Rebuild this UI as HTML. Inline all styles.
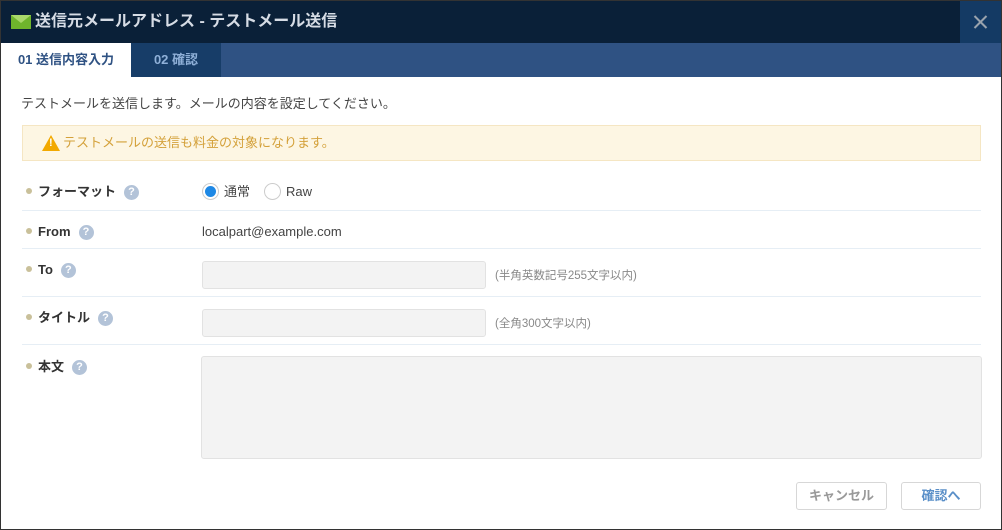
<!DOCTYPE html>
<html><head><meta charset="utf-8"><style>
*{box-sizing:border-box;margin:0;padding:0}
body{width:1002px;height:530px;background:#333;font-family:"Liberation Sans","Noto Sans CJK JP",sans-serif;overflow:hidden;position:relative}
.dlg{position:absolute;left:1px;top:1px;width:1000px;height:528px;background:#fff}
.hd{position:absolute;left:0;top:0;width:1000px;height:42px;background:#0a2038;color:#d6dce5;font-size:16px;font-weight:bold}
.hd .t{position:absolute;left:34px;top:11px;line-height:20px}
.env{position:absolute;left:10px;top:14px;width:20px;height:14px;background:#6fb52c}
.env:after{content:"";position:absolute;left:0;top:0;border-left:10px solid transparent;border-right:10px solid transparent;border-top:8px solid #a9d86a}
.x{position:absolute;right:0;top:0;width:41px;height:42px;background:#143a64}
.x:before,.x:after{content:"";position:absolute;left:12px;top:20px;width:17px;height:2px;background:#9aa3ad;transform:rotate(45deg)}
.x:after{transform:rotate(-45deg)}
.tabs{position:absolute;left:0;top:42px;width:1000px;height:34px;background:#2f5283}
.tab1{position:absolute;left:0;top:0;width:130px;height:34px;background:#fff;color:#2f5283;font-size:13px;font-weight:bold;line-height:34px;text-align:center}
.tab2{position:absolute;left:130px;top:0;width:90px;height:34px;background:#173d68;color:#8fb0d8;font-size:13px;font-weight:bold;line-height:34px;text-align:center}
.intro{position:absolute;left:20px;top:92px;font-size:13px;color:#444}
.warn{position:absolute;left:21px;top:124px;width:959px;height:36px;background:#fdf6e3;border:1px solid #f5e6c3;color:#d4a13a;font-size:13px;line-height:34px;padding-left:40px}
.tri{position:absolute;left:19px;top:9px;width:0;height:0;border-left:9px solid transparent;border-right:9px solid transparent;border-bottom:16px solid #f2a900}
.tri:after{content:"!";position:absolute;left:-2px;top:1px;color:#fff;font-size:11px;font-weight:bold;line-height:14px}
.row{position:absolute;left:21px;width:959px;border-bottom:1px solid #e6eef5}
.lb{position:absolute;left:4px;font-size:13px;font-weight:bold;color:#333;line-height:18px}
.lb:before{content:"";display:inline-block;width:6px;height:6px;border-radius:50%;background:#c9c09a;margin-right:6px;vertical-align:2px}
.q{display:inline-block;width:15px;height:15px;border-radius:50%;background:#b3c3d8;color:#fff;font-size:11px;text-align:center;line-height:15px;margin-left:8px;vertical-align:-1px;position:relative;top:-2px}
.inp{position:absolute;left:180px;height:28px;background:#f3f3f3;border:1px solid #e2e2e2;border-radius:3px}
.hint{position:absolute;font-size:11.5px;color:#888}
.btn{position:absolute;top:481px;height:28px;border:1px solid #d7d7d7;border-radius:3px;background:#fff;font-size:13px;font-weight:bold;text-align:center;line-height:26px}
</style></head><body>
<div class="dlg">
<div class="hd"><div class="env"></div><div class="t">送信元メールアドレス - テストメール送信</div><div class="x"></div></div>
<div class="tabs"><div class="tab1">01 送信内容入力</div><div class="tab2">02 確認</div></div>
<div class="intro">テストメールを送信します。メールの内容を設定してください。</div>
<div class="warn"><div class="tri"></div>テストメールの送信も料金の対象になります。</div>
<div class="row" style="top:170px;height:40px"><div class="lb" style="top:12px">フォーマット<span class="q">?</span></div>
<div style="position:absolute;left:180px;top:12px;width:17px;height:17px;border-radius:50%;border:1px solid #ccc;background:#fff"><div style="position:absolute;left:2px;top:2px;width:11px;height:11px;border-radius:50%;background:#1e88e5"></div></div>
<div style="position:absolute;left:202px;top:12px;font-size:13px;color:#444;line-height:18px">通常</div>
<div style="position:absolute;left:242px;top:12px;width:17px;height:17px;border-radius:50%;border:1px solid #ccc;background:#fff"></div>
<div style="position:absolute;left:264px;top:12px;font-size:13px;color:#444;line-height:18px">Raw</div></div>
<div class="row" style="top:210px;height:38px"><div class="lb" style="top:12px">From<span class="q">?</span></div>
<div style="position:absolute;left:180px;top:12px;font-size:13px;color:#444;line-height:18px">localpart@example.com</div></div>
<div class="row" style="top:248px;height:48px"><div class="lb" style="top:12px">To<span class="q">?</span></div>
<div class="inp" style="top:12px;width:284px"></div><div class="hint" style="left:473px;top:18px">(半角英数記号255文字以内)</div></div>
<div class="row" style="top:296px;height:48px"><div class="lb" style="top:12px">タイトル<span class="q">?</span></div>
<div class="inp" style="top:12px;width:284px"></div><div class="hint" style="left:473px;top:18px">(全角300文字以内)</div></div>
<div class="lb" style="left:25px;top:357px;position:absolute">本文<span class="q">?</span></div>
<div class="inp" style="left:200px;top:355px;width:781px;height:103px"></div>
<div class="btn" style="left:795px;width:91px;color:#999">キャンセル</div>
<div class="btn" style="left:900px;width:80px;color:#5a8fc8">確認へ</div>
</div>
</body></html>
